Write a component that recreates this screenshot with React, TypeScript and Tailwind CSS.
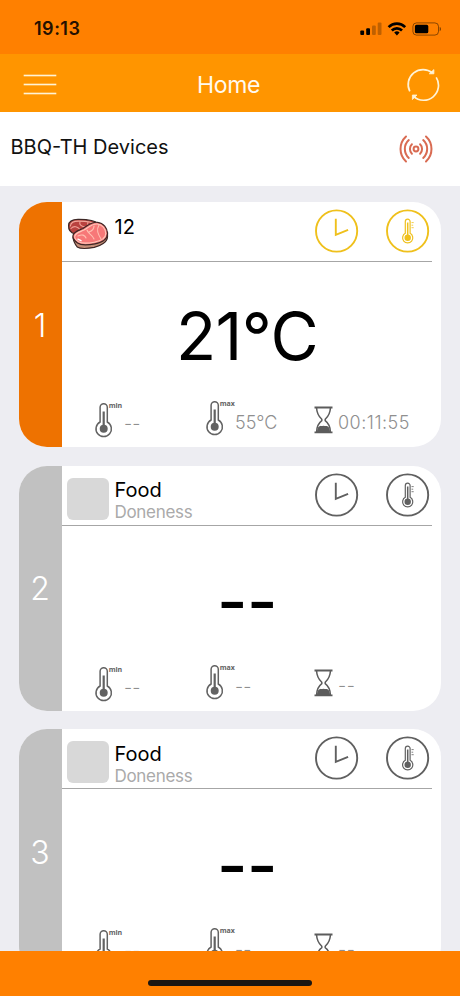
import React from 'react';
import { clsx } from 'clsx';

interface Probe {
  id: number;
  active: boolean;
  food: string;
  doneness?: string;
  temp: string;
  min: string;
  max: string;
  timer: string;
}

const probes: Probe[] = [
  { id: 1, active: true, food: '12', temp: '21°C', min: '--', max: '55°C', timer: '00:11:55' },
  { id: 2, active: false, food: 'Food', doneness: 'Doneness', temp: '--', min: '--', max: '--', timer: '--' },
  { id: 3, active: false, food: 'Food', doneness: 'Doneness', temp: '--', min: '--', max: '--', timer: '--' },
];

function StatusIcons() {
  return (
    <svg width="80" height="14" viewBox="0 0 80 14" fill="#000" className="overflow-visible">
      <rect x="0.3" y="8.6" width="3.8" height="4.4" rx="1" />
      <rect x="6.2" y="6.2" width="3.8" height="6.8" rx="1" />
      <rect x="12" y="3.4" width="3.8" height="9.6" rx="1" opacity="0.25" />
      <rect x="17.7" y="0.6" width="3.8" height="12.4" rx="1" opacity="0.25" />
      <g fill="none" stroke="#000" strokeWidth="2.7">
        <path d="M28.6 5.1a11.8 11.8 0 0 1 16.6 0" />
        <path d="M31.8 8.5a7.2 7.2 0 0 1 10.2 0" />
      </g>
      <path d="M36.9 13.4l-2.7-2.8a3.9 3.9 0 0 1 5.4 0z" />
      <rect x="52.9" y="0.9" width="25.6" height="12.2" rx="3.6" fill="none" stroke="#000" strokeOpacity="0.45" />
      <rect x="54.9" y="2.8" width="13.4" height="8.5" rx="1.6" />
      <path d="M79.7 5v4.2c.9-.4 1.3-1.2 1.3-2.1s-.4-1.7-1.3-2.1z" opacity="0.5" />
    </svg>
  );
}

function RefreshIcon() {
  return (
    <svg width="34" height="34" viewBox="0 0 34 34" fill="none" stroke="#fff3d6" strokeWidth="1.7">
      <path d="M3.8 23.3A14.9 14.9 0 0 1 26.5 5" />
      <path d="M30.2 9.4A14.9 14.9 0 0 1 7.5 28.3" />
      <path d="M27.9 1.6v4.2h-4.6z" fill="#fff3d6" strokeWidth="0.8" />
      <path d="M6.4 31.6v-4.6h4.6z" fill="#fff3d6" strokeWidth="0.8" />
    </svg>
  );
}

function BroadcastIcon() {
  return (
    <svg width="34" height="28" viewBox="0 0 34 28" fill="none" stroke="#d96b52" strokeWidth="2" strokeLinecap="round">
      <circle cx="17" cy="14" r="2.4" />
      <path d="M12.9 9.3a6.6 6.6 0 0 0 0 9.4M21.1 9.3a6.6 6.6 0 0 1 0 9.4" />
      <path d="M9.8 5.1a12 12 0 0 0 0 17.8M24.2 5.1a12 12 0 0 1 0 17.8" />
      <path d="M7 1.5a17 17 0 0 0 0 25M27 1.5a17 17 0 0 1 0 25" />
    </svg>
  );
}

function SteakIcon() {
  return (
    <svg width="42" height="32" viewBox="0 0 42 32" strokeLinejoin="round" strokeLinecap="round">
      <path d="M1.6 7.5C1.8 3 6.2 1.2 12 1.4c7 .1 16 .8 18.5 4.2 2 3.8-1 7.4-6 9.4L8 16C3.8 14.8 1.3 11.5 1.6 7.5z" fill="#b9423f" stroke="#3d2725" strokeWidth="1.2" />
      <path d="M3.4 8C3.7 4.5 7 3 12 3.1c6 .1 13.5.7 16 3.2" fill="none" stroke="#f0a69a" strokeWidth="1.1" />
      <path d="M4 10.5c3-3.5 7-1.5 9 1M13 3.5c-1 3 1 5 5 5.5M21 4c-1 2 0 4 3 4.5" fill="none" stroke="#ef9d94" strokeWidth="1.1" />
      <path d="M6.2 18.5c-.3 4 1.5 7 4 10.5 3.5 2.2 11 1.5 17 .4 6.5-1.4 13-5.4 13.3-10.4V14z" fill="#c58e78" stroke="#3d2725" strokeWidth="1.2" />
      <path d="M6 17.5C7 13 12 12.5 16 10.5 21 7.5 24 3.8 30.5 4.3c6 .5 10 6.2 10 11.2 0 6-6 9-12.5 10.3-6 1.2-14 1.7-17.5-.8C7.5 22.8 5.5 20 6 17.5z" fill="#f77878" stroke="#3d2725" strokeWidth="1.2" />
      <path d="M7.8 18C9 14.5 13 14 17 12c5-2.800 8-6.500 13.300-6 5 .5 8.500 5 8.500 9.500 0 5-5.500 7.500-11.500 8.700-5.500 1-12.800 1.500-16-.6-2.500-1.600-4-3.600-3.500-5.600z" fill="none" stroke="#ffc9bb" strokeWidth="1.1" />
      <path d="M11 18c4-2 7-1 8 2M20 12c1 4 5 4 7 9M27 8c0 4-2 5-5 6M32 7c-3 5-1 9 2 14" fill="none" stroke="#ffc0b2" strokeWidth="1.1" />
      <path d="M11 21.2l3 1.5" stroke="#fff" strokeWidth="1.5" />
    </svg>
  );
}

function ClockIcon() {
  return (
    <svg width="44" height="44" viewBox="0 0 44 44" fill="none" stroke="currentColor" strokeWidth="1.9">
      <circle cx="21.6" cy="22" r="20.6" />
      <path d="M20.8 9.8v16l12.3-4.9" />
    </svg>
  );
}

function ProbeIcon() {
  return (
    <svg width="44" height="44" viewBox="0 0 44 44" fill="none" stroke="currentColor">
      <circle cx="21.6" cy="22" r="20.6" strokeWidth="1.9" />
      <path d="M19.3 24.3V12.6a2.4 2.4 0 0 1 4.800 0v11.700a5.100 5.100 0 1 1-4.800 0z" strokeWidth="1.200" />
      <path d="M21.7 13.5v14" strokeWidth="1.5" />
      <circle cx="21.7" cy="28.7" r="3.2" fill="currentColor" stroke="none" />
      <path d="M25.5 13.6h2.200M25.500 16.200h1.700M25.500 18.700h2.200" strokeWidth="1" opacity="0.8" />
    </svg>
  );
}

function LimitIcon({ label }: { label: string }) {
  return (
    <svg width="30" height="36" viewBox="0 0 30 36" fill="none" stroke="#626262" className="overflow-visible">
      <path d="M5.1 20V5.300a3.600 3.600 0 0 1 7.200 0V20a7.700 7.700 0 1 1-7.200 0z" strokeWidth="1.500" />
      <path d="M8.700 9.500v17" strokeWidth="2.200" />
      <circle cx="8.700" cy="26.700" r="4" fill="#626262" stroke="none" />
      <text x="13.800" y="6" fill="#626262" stroke="none" className="font-['Open_Sans'] text-[7px] font-bold tracking-[-0.1px]">
        {label}
      </text>
    </svg>
  );
}

function HourglassIcon() {
  return (
    <svg width="19" height="28" viewBox="0 0 19 28" fill="none" stroke="#5c5c5c">
      <path d="M0.5 1.5h18M0.5 26.3h18" strokeWidth="1.8" />
      <path d="M2.6 2c.2 5.5 2.4 8.7 5.2 11.3v1.4C4.8 17 2.7 20 2.6 26M16.4 2c-.2 5.5-2.4 8.7-5.2 11.3v1.4c3 2.3 5.1 5.3 5.2 11.3" strokeWidth="1.5" />
      <path d="M3 26c0-3 .9-4.8 2-5.6 1.5-.8 2.7-.2 4.5-.7 1.8.5 3-.1 4.5.7 1.1.8 2 2.6 2 5.6z" fill="#5c5c5c" stroke="none" />
    </svg>
  );
}

function ProbeCard({ probe }: { probe: Probe }) {
  const idle = probe.temp === '--';

  return (
    <section className="flex h-[245px] shrink-0 overflow-hidden rounded-[28px] bg-white">
      <div
        className={clsx(
          'flex w-[43px] shrink-0 items-center justify-center pt-0.5 pr-px text-[32px] font-[350] text-white',
          probe.active ? 'bg-[#ee7200]' : 'bg-[#c1c1c1]'
        )}
      >
        {probe.id}
      </div>
      <div className="mr-[9px] flex-1">
        <header className="flex h-[60px] border-b border-[#a6a6a6] pl-[5px]">
          <div className="mt-3 h-[42px] w-[42px] shrink-0">
            {probe.active ? (
              <div className="pt-1"><SteakIcon /></div>
            ) : (
              <div className="h-full w-full rounded-[6px] bg-[#d8d8d8]" />
            )}
          </div>
          <div className="ml-[5.5px] flex-1 pt-[14.5px]">
            <h2 className="text-[20px] leading-5 text-black">{probe.food}</h2>
            <p className="pt-0.5 text-[17px] leading-5 tracking-[-0.3px] text-[#aaa]">{probe.doneness}</p>
          </div>
          <div
            className={clsx(
              'flex gap-[27px] pt-[7px] pr-[2.5px]',
              probe.active ? 'text-[#efc01c]' : 'text-[#606060]'
            )}
          >
            <ClockIcon />
            <ProbeIcon />
          </div>
        </header>
        <div
          className={clsx(
            'flex h-[138px] items-center justify-center text-[66px] leading-none text-black',
            idle ? 'pt-[13px] font-medium tracking-[-0.5px]' : 'pt-[9px] tracking-[-0.6px]'
          )}
        >
          {probe.temp}
        </div>
        <footer className="flex pl-[33px] text-[18px] leading-[18px] font-light text-[#8f8f8f]">
          <div className="flex w-[111px] pt-0.5">
            <LimitIcon label="min" />
            <span className="-ml-px pt-[13px]">{probe.min}</span>
          </div>
          <div className="flex w-[108px]">
            <LimitIcon label="max" />
            <span className="-ml-px pt-3.5">{probe.max}</span>
          </div>
          <div className="flex pt-[5.5px]">
            <HourglassIcon />
            <span className="ml-[5px] pt-2 tracking-[0.5px]">{probe.timer}</span>
          </div>
        </footer>
      </div>
    </section>
  );
}

export default function App() {
  return (
    <div className="flex h-[996px] w-[460px] flex-col overflow-hidden bg-[#ededf2] font-['Inter',sans-serif]">
      <div className="flex h-[54px] shrink-0 items-start justify-between bg-[#ff8000] pt-[19px] pr-5 pl-[34px]">
        <span className="text-[18px] leading-5 font-semibold tracking-[0.5px] text-[#241000]">19:13</span>
        <div className="pt-[3px]">
          <StatusIcons />
        </div>
      </div>
      <nav className="flex h-[58px] shrink-0 items-center justify-between bg-[#ff9500] pt-1 pr-5 pl-6">
        <div className="flex w-8 flex-col gap-2 pb-0.5">
          <span className="h-px bg-[#fff3d6] ring-[0.3px] ring-[#fff3d6]" />
          <span className="h-px bg-[#fff3d6] ring-[0.3px] ring-[#fff3d6]" />
          <span className="h-px bg-[#fff3d6] ring-[0.3px] ring-[#fff3d6]" />
        </div>
        <h1 className="pr-[5px] text-[23px] leading-6 tracking-[-0.4px] text-[#fffaf0]">Home</h1>
        <RefreshIcon />
      </nav>
      <div className="flex h-[74px] shrink-0 items-start justify-between bg-white pr-[27px] pl-[10.5px]">
        <span className="pt-6 text-[20px] leading-[22px] text-[#111]">BBQ-TH Devices</span>
        <div className="pt-[23px]">
          <BroadcastIcon />
        </div>
      </div>
      <main className="flex min-h-0 flex-1 flex-col gap-[18.7px] overflow-hidden pt-4 pr-[19px] pl-[19px]">
        {probes.map((probe) => (
          <ProbeCard key={probe.id} probe={probe} />
        ))}
      </main>
      <div className="flex h-[45px] shrink-0 justify-center bg-[#ff8000] pt-[29px]">
        <div className="h-1.5 w-[164px] rounded-full bg-[#1a1612]" />
      </div>
    </div>
  );
}
